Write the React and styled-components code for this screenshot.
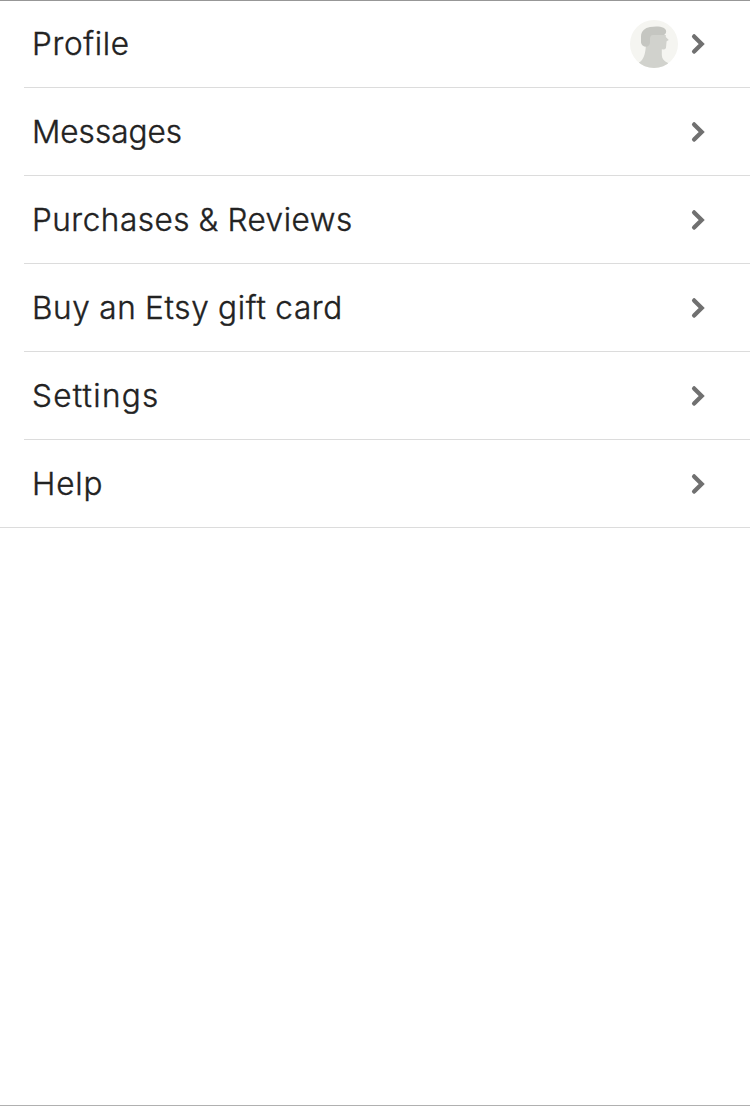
import React from "react";
import styled, { createGlobalStyle } from "styled-components";

const GlobalStyle = createGlobalStyle`
  *, *::before, *::after { box-sizing: border-box; }
  body { margin: 0; background: #fff; }
`;

const Screen = styled.main`
  height: 1106px;
  border-bottom: 1px solid #b0b0b0;
  box-shadow: inset 0 1px 0 #979797;
  background: #fff;
  color: #222;
  font-family: Inter, "Liberation Sans", sans-serif;
`;

const Menu = styled.nav`
  border-bottom: 1px solid #dcdcdc;
`;

const Row = styled.a`
  display: flex;
  align-items: center;
  height: 88px;
  margin-left: 24px;
  padding: 1px 41px 0 8px;
  border-bottom: 1px solid #dcdcdc;

  &:last-child { height: 87px; border-bottom: 0; }
`;

const Label = styled.span`
  flex: 1;
  font-size: 31.5px;
  font-weight: 300;
  line-height: 40px;
  white-space: nowrap;
  letter-spacing: ${(p) => p.$tracking}px;
  word-spacing: -0.8px;
  -webkit-text-stroke: 0.4px #222;
`;

const Avatar = styled.svg`
  display: block;
  width: 48px;
  height: 48px;
  margin-right: 11px;
`;

const Chevron = styled.svg`
  display: block;
  width: 20px;
  height: 24px;
`;

const items = [
  { label: "Profile", tracking: 0.67, avatar: true },
  { label: "Messages", tracking: 0 },
  { label: "Purchases & Reviews", tracking: 0.52 },
  { label: "Buy an Etsy gift card", tracking: 0.66 },
  { label: "Settings", tracking: 1.26 },
  { label: "Help", tracking: 0.85 },
];

function ProfileAvatar() {
  return (
    <Avatar viewBox="0 0 48 48" aria-hidden="true">
      <defs>
        <clipPath id="avatar-clip">
          <circle cx="24" cy="24" r="24" />
        </clipPath>
      </defs>
      <g clipPath="url(#avatar-clip)">
        <rect width="48" height="48" fill="#f5f5f1" />
        <path
          d="M20 15H35.8V17L38.8 20.1L36.6 21.2L36 27.8Q35.6 29.5 33.6 29.4L31.8 29.3V35C32 39 34 41.2 38 43V48H9V42.6C13.6 40 15.4 34 15.8 26Z"
          fill="#d1d2cd"
        />
        <path
          d="M11 16.5C11.2 11 15 7.9 20 7.1C25 6.2 30 6.2 33.5 7.8C36.7 9.3 36.8 12.8 35 14.3C33.8 15.3 32 15.1 30 15H23C20.8 15.1 20 16.8 20 19V22.6C20 24.8 18.5 26.6 16.4 26.7C13.2 26.6 11.2 24.6 11 22.4Z"
          fill="#c5c6c1"
        />
      </g>
    </Avatar>
  );
}

export default function App() {
  return (
    <>
      <GlobalStyle />
      <Screen>
        <Menu>
          {items.map((item) => (
            <Row key={item.label}>
              <Label $tracking={item.tracking}>{item.label}</Label>
              {item.avatar && <ProfileAvatar />}
              <Chevron viewBox="0 0 20 24" fill="none" aria-hidden="true">
                <path
                  d="M5.1 4.4L12.7 12L5.1 19.6"
                  stroke="#707070"
                  strokeWidth="4.3"
                  strokeLinecap="round"
                />
              </Chevron>
            </Row>
          ))}
        </Menu>
      </Screen>
    </>
  );
}
